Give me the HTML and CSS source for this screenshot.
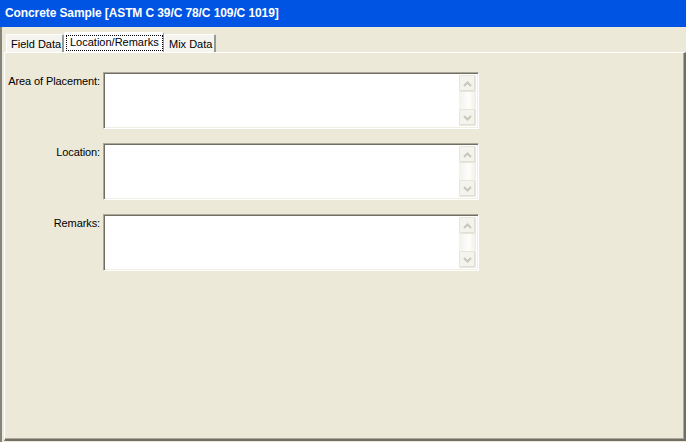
FILE: index.html
```html
<!DOCTYPE html>
<html>
<head>
<meta charset="utf-8">
<link rel="stylesheet" href="styles.css">
</head>
<body>
<div class="window">
  <div class="titlebar">Concrete Sample [ASTM C 39/C 78/C 109/C 1019]</div>
  <div class="client">
    <div class="tabs">
      <div class="tab first">Field Data</div>
      <div class="tab selected"><span class="focus">Location/Remarks</span></div>
      <div class="tab last">Mix Data</div>
    </div>
    <div class="panel">
      <div class="form">
        <div class="label">Area of Placement:</div>
        <div class="memo"><div class="memo-area"></div><div class="vscroll"><div class="sbtn up"><svg width="9" height="6" viewBox="0 0 9 6"><path d="M1 5 L4.5 1.5 L8 5" fill="none" stroke="#c9c7ba" stroke-width="2"/></svg></div><div class="track"></div><div class="sbtn down"><svg width="9" height="6" viewBox="0 0 9 6"><path d="M1 1 L4.5 4.5 L8 1" fill="none" stroke="#c9c7ba" stroke-width="2"/></svg></div></div></div>
        <div class="label">Location:</div>
        <div class="memo"><div class="memo-area"></div><div class="vscroll"><div class="sbtn up"><svg width="9" height="6" viewBox="0 0 9 6"><path d="M1 5 L4.5 1.5 L8 5" fill="none" stroke="#c9c7ba" stroke-width="2"/></svg></div><div class="track"></div><div class="sbtn down"><svg width="9" height="6" viewBox="0 0 9 6"><path d="M1 1 L4.5 4.5 L8 1" fill="none" stroke="#c9c7ba" stroke-width="2"/></svg></div></div></div>
        <div class="label">Remarks:</div>
        <div class="memo"><div class="memo-area"></div><div class="vscroll"><div class="sbtn up"><svg width="9" height="6" viewBox="0 0 9 6"><path d="M1 5 L4.5 1.5 L8 5" fill="none" stroke="#c9c7ba" stroke-width="2"/></svg></div><div class="track"></div><div class="sbtn down"><svg width="9" height="6" viewBox="0 0 9 6"><path d="M1 1 L4.5 4.5 L8 1" fill="none" stroke="#c9c7ba" stroke-width="2"/></svg></div></div></div>
      </div>
    </div>
  </div>
</div>
</body>
</html>
```
FILE: styles.css
```css
* { box-sizing: border-box; }
html, body { margin: 0; padding: 0; }
body {
  width: 686px;
  height: 442px;
  overflow: hidden;
  background: #ece9d8;
  font-family: "Liberation Sans", Arial, sans-serif;
  font-size: 11px;
  color: #000;
}
.window {
  width: 686px;
  height: 442px;
  display: flex;
  flex-direction: column;
}
.titlebar {
  height: 27px;
  background: #0054e3;
  color: #fff;
  font-weight: bold;
  font-size: 12px;
  letter-spacing: -0.1px;
  padding: 6px 0 0 5px;
  white-space: nowrap;
}
.client {
  flex: 1;
  display: flex;
  flex-direction: column;
  border-left: 2px solid #85847a;
  padding: 5px 0 1px 2px;
}
.tabs {
  display: flex;
  align-items: flex-end;
  height: 20px;
  padding-left: 2px;
}
.tab {
  height: 18px;
  padding: 3px 0 0 4px;
  border-top: 1px solid #fff;
  border-left: 1px solid #fff;
  border-right: 2px solid #919b9c;
  border-top-left-radius: 2px;
  border-top-right-radius: 2px;
  background: #f5f4ef;
  white-space: nowrap;
  line-height: 13px;
}
.tab.first { width: 58px; }
.tab.last { width: 52px; }
.tab.selected {
  height: 20px;
  width: 100px;
  background: #fcfcfe;
  padding: 2px 0 0 1px;
  border-right: 1px solid #919b9c;
}
.focus {
  display: inline-block;
  border: 1px dotted #000;
  padding: 0 3px 1px 3px;
  line-height: 13px;
}
.panel {
  flex: 1;
  border-top: 1px solid #fff;
  border-left: 1px solid #fff;
  border-right: 2px solid #716f64;
  border-bottom: 2px solid #716f64;
  box-shadow: inset -1px -1px 0 #aca899;
  padding-top: 19px;
}
.form {
  display: grid;
  grid-template-columns: 95px 376px;
  column-gap: 3px;
  row-gap: 14px;
}
.label {
  text-align: right;
  padding-top: 3px;
  white-space: nowrap;
  line-height: 13px;
  letter-spacing: -0.1px;
}
.memo {
  height: 57px;
  display: flex;
  border-top: 1px solid #aca899;
  border-left: 1px solid #aca899;
  border-right: 1px solid #fff;
  border-bottom: 1px solid #fff;
  box-shadow: inset 1px 1px 0 #716f64, inset -1px -1px 0 #f1efe2;
  background: #fff;
  padding: 2px;
}
.memo-area { flex: 1; }
.vscroll {
  width: 17px;
  display: flex;
  flex-direction: column;
  background: linear-gradient(to right, #f3f1ec, #fefefb 60%, #f0eee6);
}
.sbtn {
  height: 17px;
  border: 1px solid #e8e6dc;
  border-radius: 2px;
  background: #f4f3ee;
  box-shadow: inset -1px -1px 0 #e2e0d5;
  display: flex;
  align-items: center;
  justify-content: center;
}
.track { flex: 1; }
```
